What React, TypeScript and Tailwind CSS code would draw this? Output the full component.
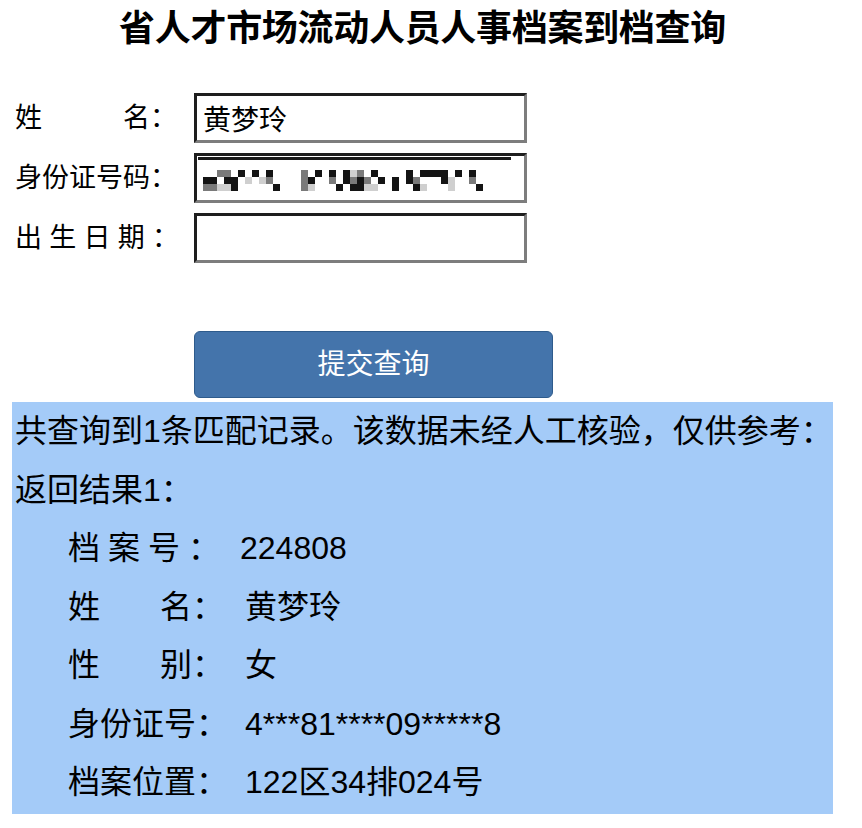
import React from 'react';

const FONT = '"Liberation Sans", "Noto Sans CJK SC", sans-serif';

// rough mosaic of the masked ID number
const MOSAIC = [
  '..gg.#.#.#....g.#.#.#lg.#....#.####.#.#.',
  '##.##.l.lg....g#..g.#g#g.#.#.#g...#l..g.',
  'ggll#.....#...gl...#.##ll..#..#l...l...#',
];

const shade: Record<string, string> = {
  '#': 'bg-[#141414]',
  g: 'bg-[#7a7a7a]',
  l: 'bg-[#cfcfcf]',
  '.': 'bg-transparent',
};

function Mosaic() {
  return (
    <div className="flex flex-col">
      {MOSAIC.map((row, r) => (
        <div key={r} className="flex">
          {row.split('').map((c, i) => (
            <div key={i} className={`w-[7px] h-[7px] ${shade[c]}`} />
          ))}
        </div>
      ))}
    </div>
  );
}

const boxCls =
  'w-[333px] h-[50px] border-[3px] border-t-[#1e1e1e] border-l-[#1e1e1e] border-b-[#7d7d7d] border-r-[#7d7d7d] bg-white';

function Spread({ parts, width }: { parts: string[]; width: string }) {
  return (
    <div className={`flex justify-between ${width}`}>
      {parts.map((p, i) => (
        <span key={i}>{p}</span>
      ))}
    </div>
  );
}

function FormRow({ label, children }: { label: React.ReactNode; children: React.ReactNode }) {
  return (
    <div className="flex items-center h-[50px]">
      <div className="w-[182px] pl-[3px] text-[27px] text-black">{label}</div>
      {children}
    </div>
  );
}

const details: [React.ReactNode, string, string][] = [
  [<Spread parts={['档', '案', '号', '：']} width="w-[152px]" />, '224808', 'w-[172px]'],
  [<Spread parts={['姓', '名：']} width="w-[156px]" />, '黄梦玲', 'w-[177px]'],
  [<Spread parts={['性', '别：']} width="w-[156px]" />, '女', 'w-[177px]'],
  [<span>身份证号：</span>, '4***81****09*****8', 'w-[177px]'],
  [<span>档案位置：</span>, '122区34排024号', 'w-[177px]'],
];

export default function App() {
  return (
    <div className="min-h-screen bg-white text-black" style={{ fontFamily: FONT }}>
      <div className="w-[821px] ml-[12px]">
        <h1 className="h-[57px] flex items-center justify-center text-[36px] font-bold tracking-[-0.3px]">
          省人才市场流动人员人事档案到档查询
        </h1>

        <div className="mt-[36px] flex flex-col gap-[10px]">
          <FormRow label={<Spread parts={['姓', '名：']} width="w-[162px]" />}>
            <input
              readOnly
              defaultValue="黄梦玲"
              className={`${boxCls} px-[6px] text-[28px] outline-none`}
              style={{ fontFamily: FONT }}
            />
          </FormRow>
          <FormRow label={<span>身份证号码：</span>}>
            <div className={`${boxCls} relative flex items-center pl-[6px]`}>
              <div className="absolute left-[1px] top-[1px] w-[313px] h-[3px] bg-[#1a1a1a]" />
              <div className="mt-[4px]">
                <Mosaic />
              </div>
            </div>
          </FormRow>
          <FormRow label={<Spread parts={['出', '生', '日', '期', '：']} width="w-[164px]" />}>
            <input readOnly defaultValue="" className={`${boxCls} px-[6px] text-[28px] outline-none`} />
          </FormRow>
        </div>

        <button
          type="button"
          className="mt-[68px] ml-[182px] w-[359px] h-[67px] rounded-[6px] bg-[#4474ab] border border-[#2e5b8c] text-white text-[28px] flex items-center justify-center"
          style={{ fontFamily: FONT }}
        >
          提交查询
        </button>

        <div className="mt-[4px] w-[821px] h-[412px] bg-[#a4cbf8] text-[32px] leading-none">
          <div className="h-[58.5px] flex items-center pl-[3px]">
            共查询到1条匹配记录。该数据未经人工核验，仅供参考：
          </div>
          <div className="h-[58.5px] flex items-center pl-[3px]">返回结果1：</div>
          {details.map(([label, value, w], i) => (
            <div key={i} className="h-[58.5px] flex items-center pl-[56px]">
              <div className={w}>{label}</div>
              <span>{value}</span>
            </div>
          ))}
        </div>
      </div>
    </div>
  );
}
